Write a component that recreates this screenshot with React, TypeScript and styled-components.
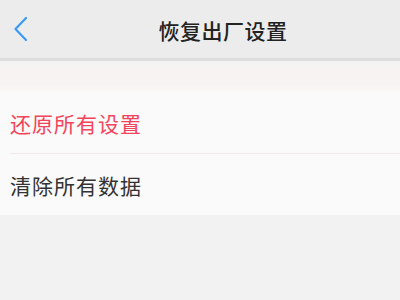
import React from 'react';
import styled, { createGlobalStyle } from 'styled-components';

const GlobalStyle = createGlobalStyle`
  html, body {
    margin: 0;
    padding: 0;
    background: #f2f2f2;
    font-family: "Noto Sans CJK SC", "Noto Sans", sans-serif;
  }
`;

const Page = styled.div`
  width: 400px;
  height: 300px;
  background: #f2f2f2;
  overflow: hidden;
`;

const NavBar = styled.div`
  height: 58px;
  display: flex;
  align-items: center;
  background: #ececec;
  border-bottom: 3px solid #dddddd;
`;

const BackButton = styled.div`
  width: 40px;
  height: 58px;
  display: flex;
  align-items: center;
  padding-left: 12px;
  box-sizing: border-box;
`;

const Title = styled.h1`
  flex: 1;
  margin: 0;
  padding-left: 46px;
  text-align: center;
  font-size: 21px;
  font-weight: 500;
  color: #222;
  letter-spacing: 0.5px;
  line-height: 1;
  transform: translateY(1px);
`;

const Spacer = styled.div`
  height: 31px;
  background: linear-gradient(#f3f3f3 0px, #f8f3f3 8px, #f8f3f3 24px, #f9f7f7 31px);
`;

const List = styled.div`
  background: #fafafa;
`;

const Row = styled.div<{ $danger?: boolean }>`
  height: 61px;
  display: flex;
  align-items: center;
  padding-left: 10px;
  font-size: 21px;
  letter-spacing: 1px;
  color: ${(p) => (p.$danger ? '#f2455b' : '#333')};
`;

const Divider = styled.div`
  height: 1px;
  margin-left: 10px;
  background: #f1e8e7;
`;

const ChevronLeft = () => (
  <svg width="18" height="26" viewBox="0 0 18 26" fill="none">
    <path d="M14 2 L3.5 13 L14 24" stroke="#3b9bf3" strokeWidth="2.2" strokeLinecap="round" strokeLinejoin="round" />
  </svg>
);

export default function App() {
  return (
    <Page>
      <GlobalStyle />
      <NavBar>
        <BackButton>
          <ChevronLeft />
        </BackButton>
        <Title>恢复出厂设置</Title>
        <BackButton />
      </NavBar>
      <Spacer />
      <List>
        <Row $danger>还原所有设置</Row>
        <Divider />
        <Row>清除所有数据</Row>
      </List>
    </Page>
  );
}
